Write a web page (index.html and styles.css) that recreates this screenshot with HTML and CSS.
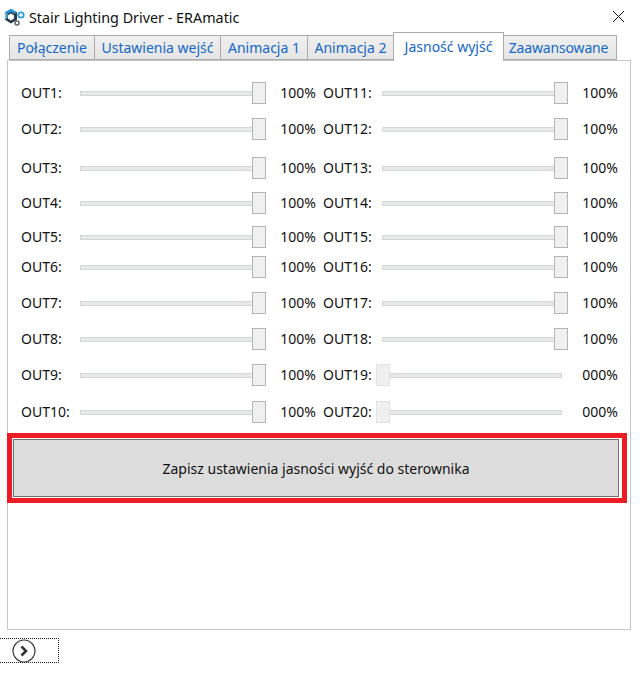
FILE: index.html
```html
<!DOCTYPE html>
<html lang="pl">
<head>
  <meta charset="UTF-8">
  <title>Stair Lighting Driver - ERAmatic</title>
  <link rel="stylesheet" href="styles.css">
</head>
<body>
  <div class="window">
    <header class="titlebar">
      <svg class="app-icon" width="20" height="18" viewBox="0 0 20 18">
        <path d="M6 1l6 3.300v7.400l-6 3.800-6-3.800V4.300z" fill="#2f3b46"/>
        <path d="M6 1l6 3.300-2.500 1.400L6 3.800 2.500 5.700 0 4.300z" fill="#1e9ae0"/>
        <path d="M0 4.300l2.500 1.400v4L0 11.700z" fill="#4db5ec"/>
        <path d="M6 5.500l3 1.700v3.400l-3 1.800-3-1.800V7.200z" fill="#fff"/>
        <circle cx="16" cy="7" r="2.700" fill="#fff" stroke="#2a9fe0" stroke-width="1.800"/>
        <circle cx="12" cy="15" r="2" fill="#fff" stroke="#5a6670" stroke-width="1.500"/>
      </svg>
      <span class="title">Stair Lighting Driver - ERAmatic</span>
      <svg class="close" width="13" height="13" viewBox="0 0 13 13">
        <path d="M1 1l11 11M12 1L1 12" stroke="#111" stroke-width="1" fill="none"/>
      </svg>
    </header>

    <nav class="tabs">
      <div class="tab">Połączenie</div>
      <div class="tab">Ustawienia wejść</div>
      <div class="tab">Animacja 1</div>
      <div class="tab">Animacja 2</div>
      <div class="tab active">Jasność wyjść</div>
      <div class="tab last">Zaawansowane</div>
    </nav>

    <main class="panel">
      <div class="outputs">
        <div class="out"><span class="out-label">OUT1:</span><div class="slider"><div class="track"></div><div class="thumb"></div></div><span class="out-value">100%</span></div>
        <div class="out"><span class="out-label">OUT11:</span><div class="slider"><div class="track"></div><div class="thumb"></div></div><span class="out-value">100%</span></div>
        <div class="out"><span class="out-label">OUT2:</span><div class="slider"><div class="track"></div><div class="thumb"></div></div><span class="out-value">100%</span></div>
        <div class="out"><span class="out-label">OUT12:</span><div class="slider"><div class="track"></div><div class="thumb"></div></div><span class="out-value">100%</span></div>
        <div class="out"><span class="out-label">OUT3:</span><div class="slider"><div class="track"></div><div class="thumb"></div></div><span class="out-value">100%</span></div>
        <div class="out"><span class="out-label">OUT13:</span><div class="slider"><div class="track"></div><div class="thumb"></div></div><span class="out-value">100%</span></div>
        <div class="out"><span class="out-label">OUT4:</span><div class="slider"><div class="track"></div><div class="thumb"></div></div><span class="out-value">100%</span></div>
        <div class="out"><span class="out-label">OUT14:</span><div class="slider"><div class="track"></div><div class="thumb"></div></div><span class="out-value">100%</span></div>
        <div class="out"><span class="out-label">OUT5:</span><div class="slider"><div class="track"></div><div class="thumb"></div></div><span class="out-value">100%</span></div>
        <div class="out"><span class="out-label">OUT15:</span><div class="slider"><div class="track"></div><div class="thumb"></div></div><span class="out-value">100%</span></div>
        <div class="out"><span class="out-label">OUT6:</span><div class="slider"><div class="track"></div><div class="thumb"></div></div><span class="out-value">100%</span></div>
        <div class="out"><span class="out-label">OUT16:</span><div class="slider"><div class="track"></div><div class="thumb"></div></div><span class="out-value">100%</span></div>
        <div class="out"><span class="out-label">OUT7:</span><div class="slider"><div class="track"></div><div class="thumb"></div></div><span class="out-value">100%</span></div>
        <div class="out"><span class="out-label">OUT17:</span><div class="slider"><div class="track"></div><div class="thumb"></div></div><span class="out-value">100%</span></div>
        <div class="out"><span class="out-label">OUT8:</span><div class="slider"><div class="track"></div><div class="thumb"></div></div><span class="out-value">100%</span></div>
        <div class="out"><span class="out-label">OUT18:</span><div class="slider"><div class="track"></div><div class="thumb"></div></div><span class="out-value">100%</span></div>
        <div class="out"><span class="out-label">OUT9:</span><div class="slider"><div class="track"></div><div class="thumb"></div></div><span class="out-value">100%</span></div>
        <div class="out"><span class="out-label">OUT19:</span><div class="slider off"><div class="track"></div><div class="thumb"></div></div><span class="out-value">000%</span></div>
        <div class="out"><span class="out-label">OUT10:</span><div class="slider"><div class="track"></div><div class="thumb"></div></div><span class="out-value">100%</span></div>
        <div class="out"><span class="out-label">OUT20:</span><div class="slider off"><div class="track"></div><div class="thumb"></div></div><span class="out-value">000%</span></div>
      </div>
      <div class="highlight">
        <button class="save">Zapisz ustawienia jasności wyjść do sterownika</button>
      </div>
    </main>

    <footer class="bottom">
      <div class="toggle">
        <svg width="24" height="24" viewBox="0 0 24 24">
          <circle cx="12" cy="12" r="11" fill="#fff" stroke="#444" stroke-width="1.200"/>
          <path d="M9.500 7.500L14 12l-4.500 4.500" fill="none" stroke="#333" stroke-width="2.600"/>
        </svg>
      </div>
    </footer>
  </div>
</body>
</html>
```

FILE: styles.css
```css
* {
  box-sizing: border-box;
  margin: 0;
  padding: 0;
}

body {
  font-family: "Noto Sans", sans-serif;
  font-size: 14px;
  background-color: #fff;
  color: #111;
}

.window {
  width: 640px;
  height: 679px;
  overflow: hidden;
}

.titlebar {
  display: flex;
  align-items: center;
  height: 32px;
  padding: 2px 0 0 5px;
}

.app-icon {
  margin-right: 4px;
}

.title {
  flex: 1;
  font-size: 14.35px;
}

.close {
  margin-right: 15px;
  margin-bottom: 2px;
}

.tabs {
  display: grid;
  grid-template-columns: 85px 126px 87px 86px 110px 113px;
  align-items: end;
  height: 29px;
  margin-left: 9px;
  position: relative;
  z-index: 1;
}

.tab {
  height: 25px;
  margin-bottom: 1px;
  margin-right: -1px;
  border: 1px solid #acacac;
  background: linear-gradient(#f0f0f0, #e5e5e5);
  color: #1467c8;
  text-align: center;
  line-height: 24px;
  white-space: nowrap;
}

.tab.active {
  height: 29px;
  margin-bottom: 0;
  border-bottom: none;
  background: #fff;
  line-height: 28px;
  position: relative;
  z-index: 1;
}

.tab.last {
  letter-spacing: -0.15px;
  padding-right: 3px;
}

.panel {
  width: 624px;
  height: 570px;
  margin-left: 7px;
  margin-top: -1px;
  padding-top: 21px;
  border: 1px solid #c6c6c6;
}

.outputs {
  display: grid;
  grid-template-columns: 302px 302px;
  grid-template-rows: 36px 39px 35px 34px 30px 36px 36px 36px 37px 32px;
  padding-left: 13px;
}

.out {
  display: flex;
  align-items: flex-start;
  height: 24px;
}

.out-label {
  width: 53px;
  line-height: 22px;
  white-space: nowrap;
}

.slider {
  position: relative;
  width: 192px;
  height: 22px;
}

.track {
  height: 5px;
  margin: 9px 6px 0;
  background-color: #e7eaea;
  border: 1px solid #d6d6d6;
}

.thumb {
  position: absolute;
  top: 0;
  right: 0;
  width: 14px;
  height: 22px;
  background-color: #f0f0f0;
  border: 1px solid #b4b4b4;
}

.slider.off .thumb {
  left: 0;
  right: auto;
  border-color: #e2e2e2;
}

.out-value {
  width: 36px;
  margin-left: 14px;
  line-height: 22px;
  text-align: right;
}

.highlight {
  width: 620px;
  height: 70px;
  margin-left: -1px;
  padding: 1px 3px 1px 1px;
  border: 5px solid #ed1c24;
}

.save {
  display: block;
  width: 100%;
  height: 100%;
  background-color: #ddd;
  border: 1px solid #707070;
  font: inherit;
  color: #111;
}

.bottom {
  height: 49px;
  padding-top: 8px;
}

.toggle {
  width: 59px;
  height: 25px;
  padding-left: 12px;
  border: 1px dotted #222;
  border-left: none;
}

.toggle svg {
  display: block;
}
```
